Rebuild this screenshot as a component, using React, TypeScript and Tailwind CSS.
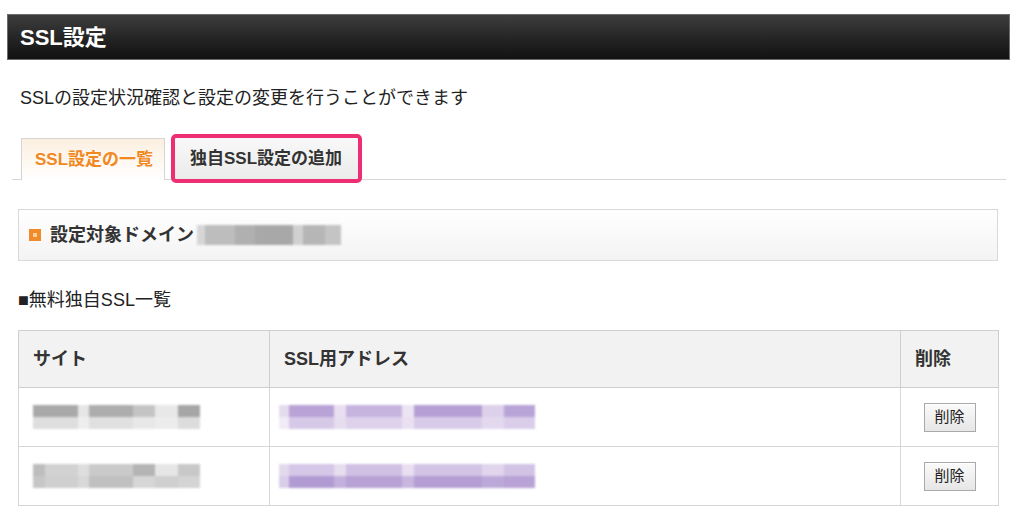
import React from "react";

const FONT = { fontFamily: '"Liberation Sans", "Noto Sans CJK JP", sans-serif' };

type Seg = string;

// pixelated (mosaic) placeholders for the masked values
const PixelRow = ({ segs, className }: { segs: Seg[]; className: string }) => (
  <div className={`flex ${className}`}>
    {segs.map((s, i) => (
      <div key={i} className={`h-full ${s}`} />
    ))}
  </div>
);

const SITE_1 = {
  top: ["w-[45px] bg-[#a9a9a9]", "w-[11px] bg-[#e6e6e6]", "w-[44px] bg-[#adadad]", "w-[22px] bg-[#c4c4c4]", "w-[23px] bg-[#e8e8e8]", "w-[22px] bg-[#a6a6a6]"],
  bottom: ["w-[45px] bg-[#dedede]", "w-[11px] bg-[#eeeeee]", "w-[44px] bg-[#e0e0e0]", "w-[22px] bg-[#e8e8e8]", "w-[23px] bg-[#ececec]", "w-[22px] bg-[#dcdcdc]"],
};
const SITE_2 = {
  top: ["w-[12px] bg-[#bdbdbd]", "w-[33px] bg-[#d2d2d2]", "w-[11px] bg-[#dedede]", "w-[44px] bg-[#cacaca]", "w-[22px] bg-[#b4b4b4]", "w-[23px] bg-[#e6e6e6]", "w-[22px] bg-[#c8c8c8]"],
  bottom: ["w-[12px] bg-[#c6c6c6]", "w-[33px] bg-[#cfcfcf]", "w-[11px] bg-[#d8d8d8]", "w-[44px] bg-[#c0c0c0]", "w-[22px] bg-[#d6d6d6]", "w-[23px] bg-[#cfcfcf]", "w-[22px] bg-[#d4d4d4]"],
};
const ADDR_1 = {
  top: ["w-[10px] bg-[#e4dcee]", "w-[45px] bg-[#b8a2d6]", "w-[12px] bg-[#e8e0f0]", "w-[56px] bg-[#c6b4de]", "w-[12px] bg-[#ebe4f2]", "w-[68px] bg-[#b59fd4]", "w-[22px] bg-[#dcd0ea]", "w-[31px] bg-[#b9a4d7]"],
  bottom: ["w-[10px] bg-[#f0ebf6]", "w-[45px] bg-[#d6c9e8]", "w-[12px] bg-[#e6ddef]", "w-[56px] bg-[#ddd1ec]", "w-[12px] bg-[#e9e1f1]", "w-[68px] bg-[#d8cbe9]", "w-[22px] bg-[#e3d9ee]", "w-[31px] bg-[#dacdea]"],
};
const ADDR_2 = {
  top: ["w-[10px] bg-[#e2d9ed]", "w-[45px] bg-[#d5c7e7]", "w-[12px] bg-[#e6ddef]", "w-[56px] bg-[#d0c0e4]", "w-[12px] bg-[#e8e0f0]", "w-[68px] bg-[#d3c4e6]", "w-[22px] bg-[#e0d5ec]", "w-[31px] bg-[#d2c3e5]"],
  bottom: ["w-[10px] bg-[#d9cdea]", "w-[45px] bg-[#b29bd2]", "w-[12px] bg-[#c3b0dc]", "w-[56px] bg-[#b7a1d5]", "w-[12px] bg-[#c8b6df]", "w-[68px] bg-[#b49ed4]", "w-[22px] bg-[#bda9d9]", "w-[31px] bg-[#b8a2d6]"],
};

const Mosaic = ({ data }: { data: { top: Seg[]; bottom: Seg[] } }) => (
  <div className="flex flex-col blur-[0.8px]">
    <PixelRow segs={data.top} className="h-[12px]" />
    <PixelRow segs={data.bottom} className="h-[12px]" />
  </div>
);

const rows = [
  { id: "1", site: SITE_1, addr: ADDR_1 },
  { id: "2", site: SITE_2, addr: ADDR_2 },
];

const DeleteButton = () => (
  <button className="h-[29px] w-[52px] border border-[#a9a9a9] bg-gradient-to-b from-[#fafafa] to-[#e6e6e6] text-[15px] text-[#222] shadow-[inset_0_1px_0_#fff]">
    削除
  </button>
);

export default function App() {
  return (
    <div className="min-h-[522px] w-[1024px] bg-white pt-[14px] text-[#222]" style={FONT}>
      {/* page title bar */}
      <div className="ml-[7px] flex h-[46px] w-[1003px] items-center border border-[#6b6b6b] bg-gradient-to-b from-[#3e3e3e] via-[#262626] to-[#121212] pl-[12px]">
        <h1 className="text-[22px] font-bold text-white">SSL設定</h1>
      </div>

      <p className="ml-[20px] mt-[28px] text-[18px] leading-[20px]">SSLの設定状況確認と設定の変更を行うことができます</p>

      {/* tabs */}
      <div className="ml-[12px] mt-[26px] flex w-[994px] items-end gap-[6px] border-b border-[#d6d6d6] pl-[9px]">
        <div className="-mb-px flex h-[42px] w-[144px] items-center border border-b-0 border-[#d4d4d4] bg-gradient-to-b from-[#fcefe0] to-white pl-[13px]">
          <span className="text-[17px] font-bold text-[#f0891f]">SSL設定の一覧</span>
        </div>
        <div className="-mb-[4px] flex h-[49px] w-[191px] items-center rounded-[5px] border-[4px] border-[#ee2e72] bg-gradient-to-b from-[#f8f8f8] to-[#ebebeb] pl-[15px]">
          <span className="text-[17px] font-bold text-[#333]">独自SSL設定の追加</span>
        </div>
      </div>

      {/* target domain */}
      <div className="ml-[18px] mt-[29px] flex h-[52px] w-[980px] items-center border border-[#d9d9d9] bg-gradient-to-b from-white to-[#f3f3f3] pl-[10px]">
        <span className="mr-[9px] flex h-[12px] w-[12px] items-center justify-center bg-[#f18a2a]">
          <span className="h-[4px] w-[4px] bg-[#fbd09a]" />
        </span>
        <span className="text-[18px] font-bold text-[#333]">設定対象ドメイン</span>
        <div className="ml-[3px] flex h-[20px] blur-[1px]">
          <div className="w-[8px] bg-[#d6d6d6]" />
          <div className="w-[30px] bg-[#bdbdbd]" />
          <div className="w-[20px] bg-[#b0b0b0]" />
          <div className="w-[38px] bg-[#a8a8a8]" />
          <div className="w-[10px] bg-[#d0d0d0]" />
          <div className="w-[22px] bg-[#b6b6b6]" />
          <div className="w-[16px] bg-[#c4c4c4]" />
        </div>
      </div>

      <p className="ml-[18px] mt-[29px] text-[18px] leading-[20px]">■無料独自SSL一覧</p>

      {/* SSL list */}
      <table className="ml-[18px] mt-[20px] w-[980px] table-fixed border-collapse border border-[#cfcfcf]">
        <colgroup>
          <col className="w-[251px]" />
          <col className="w-[631px]" />
          <col className="w-[98px]" />
        </colgroup>
        <thead>
          <tr className="h-[57px] bg-[#f2f2f2] text-left">
            <th className="border border-[#cfcfcf] pl-[14px] text-[18px] font-bold text-[#333]">サイト</th>
            <th className="border border-[#cfcfcf] pl-[14px] text-[18px] font-bold text-[#333]">SSL用アドレス</th>
            <th className="border border-[#cfcfcf] pl-[14px] text-[18px] font-bold text-[#333]">削除</th>
          </tr>
        </thead>
        <tbody>
          {rows.map((row) => (
            <tr key={row.id} className="h-[59px]">
              <td className="border border-[#d6d6d6] pl-[14px]">
                <Mosaic data={row.site} />
              </td>
              <td className="border border-[#d6d6d6] pl-[9px]">
                <Mosaic data={row.addr} />
              </td>
              <td className="border border-[#d6d6d6] text-center">
                <DeleteButton />
              </td>
            </tr>
          ))}
        </tbody>
      </table>
    </div>
  );
}
